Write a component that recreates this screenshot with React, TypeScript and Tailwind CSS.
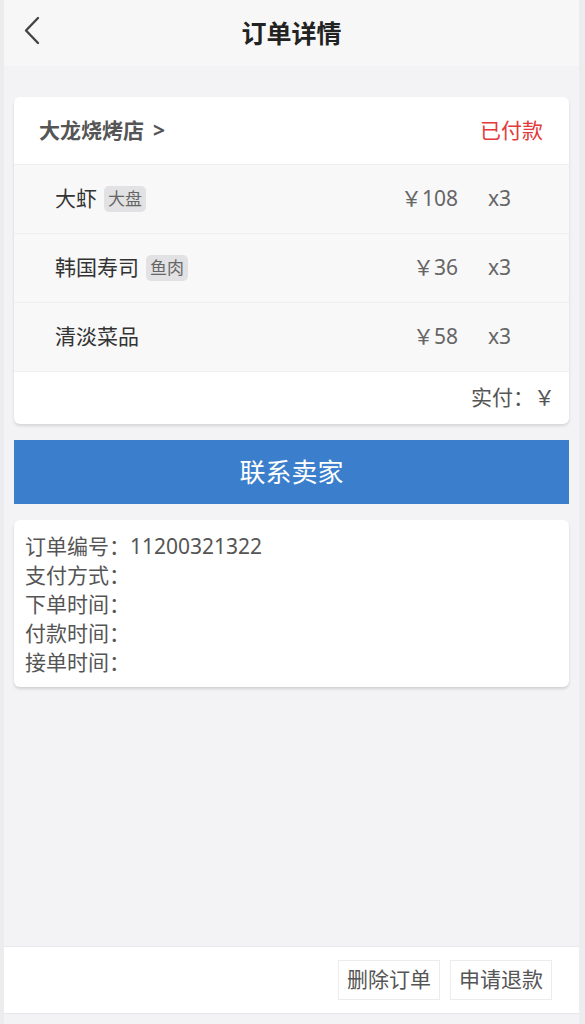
import React from "react";

type Item = { name: string; tag?: string; price: number; qty: number };

const items: Item[] = [
  { name: "大虾", tag: "大盘", price: 108, qty: 3 },
  { name: "韩国寿司", tag: "鱼肉", price: 36, qty: 3 },
  { name: "清淡菜品", price: 58, qty: 3 },
];

const infoRows = ["订单编号：11200321322", "支付方式：", "下单时间：", "付款时间：", "接单时间："];

const font = { fontFamily: '"Noto Sans", "Noto Sans CJK SC", sans-serif' };

export default function App() {
  return (
    <div className="flex h-[1024px] w-[585px] bg-[#ececee]" style={font}>
      <div className="ml-[4px] flex w-[575px] flex-col bg-[#f3f3f5]">
        {/* header */}
        <div className="relative flex h-[66px] items-center justify-center bg-[#f7f7f8]">
          <svg
            className="absolute left-[17px] top-[15px]"
            width="24"
            height="32"
            viewBox="0 0 24 32"
            fill="none"
            stroke="#444"
            strokeWidth="2.4"
            strokeLinecap="round"
            strokeLinejoin="round"
          >
            <path d="M17 3 L5 15.5 L17 28" />
          </svg>
          <h1 className="text-[25px] font-bold leading-none text-[#222]">订单详情</h1>
        </div>

        <div className="flex flex-1 flex-col px-[10px] pt-[31px]">
          {/* order card */}
          <div className="overflow-hidden rounded-[6px] bg-white shadow-[0_2px_3px_rgba(0,0,0,0.12)]">
            <div className="flex h-[68px] items-center justify-between border-b border-[#eeeeef] pl-[25px] pr-[26px]">
              <span className="text-[21px] font-bold text-[#555]">
                大龙烧烤店<span className="ml-[9px]">&gt;</span>
              </span>
              <span className="text-[21px] text-[#e23a3a]">已付款</span>
            </div>
            {items.map((it) => (
              <div
                key={it.name}
                className="flex h-[69px] items-center border-b border-[#efeff0] bg-[#f8f8f9] pl-[41px]"
              >
                <span className="text-[21px] text-[#333]">{it.name}</span>
                {it.tag && (
                  <span className="ml-[7px] rounded-[5px] bg-[#e2e2e4] px-[4px] text-[17px] leading-[26px] text-[#666]">
                    {it.tag}
                  </span>
                )}
                <span className="ml-auto text-[21px] text-[#666]">￥{it.price}</span>
                <span className="ml-[30px] w-[81px] text-[21px] text-[#666]">x{it.qty}</span>
              </div>
            ))}
            <div className="flex h-[52px] items-center justify-end pr-[14px]">
              <span className="text-[21px] text-[#555]">实付：￥</span>
            </div>
          </div>

          {/* contact */}
          <button className="mt-[16px] flex h-[64px] items-center justify-center bg-[#3b7fcc] text-[26px] text-white">
            联系卖家
          </button>

          {/* info */}
          <div className="mt-[16px] flex flex-col rounded-[6px] bg-white px-[11px] pb-[10px] pt-[12px] shadow-[0_2px_3px_rgba(0,0,0,0.14)]">
            {infoRows.map((r) => (
              <div key={r} className="text-[21px] leading-[29px] text-[#555]">
                {r}
              </div>
            ))}
          </div>
        </div>

        {/* bottom bar */}
        <div className="flex h-[67px] items-center justify-end gap-[10px] border-t border-[#e8e8ea] bg-white pr-[27px]">
          <button className="h-[40px] w-[102px] border border-[#ececec] bg-white text-[21px] text-[#555]">
            删除订单
          </button>
          <button className="h-[40px] w-[102px] border border-[#ececec] bg-white text-[21px] text-[#555]">
            申请退款
          </button>
        </div>
        <div className="h-[11px] border-t border-[#e6e6e8] bg-[#f3f3f5]" />
      </div>
    </div>
  );
}
